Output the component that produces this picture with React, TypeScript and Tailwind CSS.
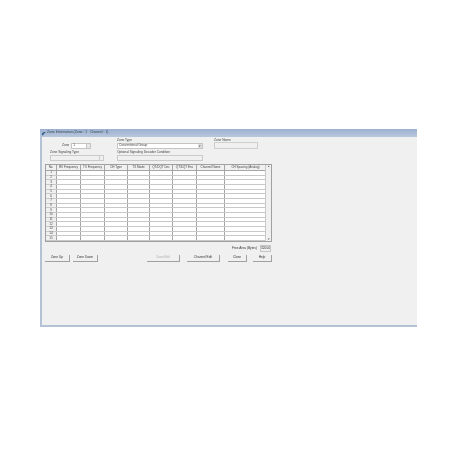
const cols = ["No.", "RX Frequency", "TX Frequency", "CH Type", "TX Mode", "QT/DQT Dec", "QT/DQT Enc", "Channel Name", "CH Spacing (Analog)"];
const gridCols = "grid grid-cols-[11px_24px_24px_23px_22px_23px_24px_28px_42px]";
const rows = Array.from({ length: 15 }, (_, i) => i + 1);

function Btn({ label, w, disabled }: { label: string; w: string; disabled?: boolean }) {
  return (
    <div className={`${w} h-[7px] flex items-center justify-center text-[3.2px] leading-none border-r border-b border-r-[#a0a0a0] border-b-[#a0a0a0] ${disabled ? "text-[#b0b0b0]" : "text-[#333]"}`}>
      {label}
    </div>
  );
}

export default function App() {
  return (
    <div className="w-[455px] h-[455px] bg-white pt-[129px] pl-[40px] font-['Liberation_Sans',sans-serif]">
      <div className="w-[377px] h-[198px] flex flex-col bg-[#f0f0f0] border-l-2 border-b-2 border-[#b4c2d6] blur-[0.3px]">
        <div className="h-[8px] shrink-0 -ml-[2px] flex items-center gap-[1px] pl-[1px] bg-gradient-to-b from-[#9cb2d0] to-[#b9c7dc] text-[3.4px] leading-none text-[#3a4454]">
          <svg width="5" height="5" viewBox="0 0 10 10">
            <path d="M2 9 C1 4 4 1 9 2 L8 5 C6 4 5 5 5 8 Z" fill="#2f5a8c" />
          </svg>
          <span className="whitespace-pre">Zone Information (Zone : 1   Channel : 1)</span>
        </div>

        <div className="pl-[8px] pt-[2px] flex text-[3.2px] leading-none text-[#444]">
          <div className="w-[54px]">
            <div className="flex items-center pl-[12px] pt-[4px] gap-[2px]">
              <span>Zone</span>
              <div className="w-[20px] h-[6px] border border-[#c4c4c4] bg-white flex items-center justify-between pl-[1px]">
                <span>1</span>
                <span className="w-[4px] h-full border-l border-[#c4c4c4] bg-[#e6e6e6]" />
              </div>
            </div>
            <div className="mt-[2px] h-[3px]">Zone Signaling Type</div>
            <div className="mt-[1px] h-[6px] border border-[#cacaca] flex justify-end">
              <span className="w-[4px] h-full border-l border-[#cacaca]" />
            </div>
          </div>
          <div className="w-[86px] ml-[13px]">
            <div className="h-[3px]">Zone Type</div>
            <div className="mt-[1px] h-[6px] border border-[#c4c4c4] bg-white flex items-center justify-between pl-[1px]">
              <span>Conventional Group</span>
              <span className="w-[4px] h-full bg-[#dedede] flex items-center justify-center text-[3px]">▾</span>
            </div>
            <div className="mt-[2px] h-[3px]">Optional Signaling Decoder Condition</div>
            <div className="mt-[1px] h-[6px] border border-[#cacaca]" />
          </div>
          <div className="w-[44px] ml-[11px]">
            <div className="h-[3px]">Zone Name</div>
            <div className="h-[7px] border border-[#cecece]" />
          </div>
        </div>

        <div className="ml-[3px] mt-[3px] w-[227px] h-[78px] flex border border-[#a0a0a0] bg-white text-[3px] leading-none text-[#444]">
          <div className="w-[219px] flex flex-col">
            <div className={`${gridCols} h-[6px] bg-[#f0f0f0] border-b border-[#a5a5a5]`}>
              {cols.map((c) => (
                <div key={c} className="flex items-center justify-center border-r border-[#a5a5a5] whitespace-nowrap">{c}</div>
              ))}
            </div>
            {rows.map((r) => (
              <div key={r} className={`${gridCols} flex-1 border-b border-[#c8c8c8]`}>
                {cols.map((c, i) => (
                  <div key={c} className={`flex items-center justify-center border-r border-[#a5a5a5] ${i === 0 ? "bg-[#f0f0f0]" : ""}`}>
                    {i === 0 ? r : ""}
                  </div>
                ))}
              </div>
            ))}
          </div>
          <div className="flex-1 bg-[#f0f0f0] border-l border-[#c8c8c8] flex flex-col justify-between items-center text-[3px]">
            <span>▴</span>
            <span>▾</span>
          </div>
        </div>

        <div className="mt-[3px] w-[229px] flex items-center justify-end gap-[3px] text-[3.2px] leading-none text-[#333]">
          <span>Free Area (Bytes)</span>
          <div className="w-[11px] h-[7px] border border-[#c4c4c4] flex items-center justify-center">32000</div>
        </div>

        <div className="mt-[3px] ml-[3px] flex">
          <Btn label="Zone Up" w="w-[25px]" />
          <div className="w-[3px]" />
          <Btn label="Zone Down" w="w-[25px]" />
          <div className="w-[49px]" />
          <Btn label="Zone Edit" w="w-[33px]" disabled />
          <div className="w-[7px]" />
          <Btn label="Channel Edit" w="w-[33px]" />
          <div className="w-[8px]" />
          <Btn label="Close" w="w-[19px]" />
          <div className="w-[6px]" />
          <Btn label="Help" w="w-[19px]" />
        </div>
      </div>
    </div>
  );
}
